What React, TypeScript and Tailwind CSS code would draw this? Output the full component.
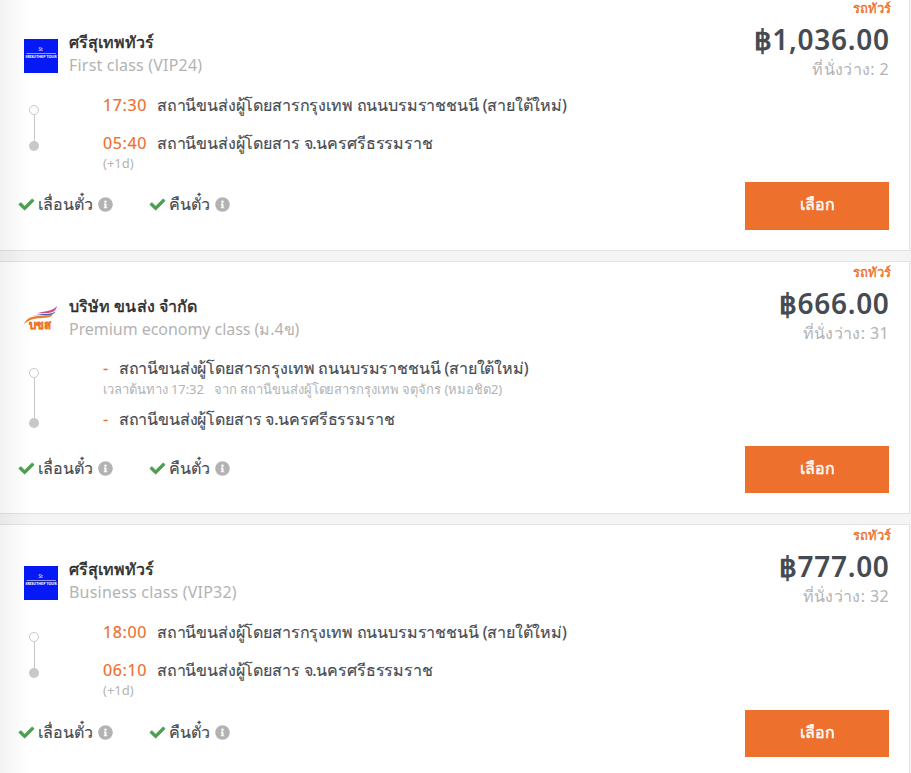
import { FaCheck, FaInfoCircle } from "react-icons/fa";

interface Stop {
  time: string;
  station: string;
  note?: string;
}

interface Trip {
  id: number;
  operator: string;
  logo: "srisuthep" | "transport";
  seatClass: string;
  price: string;
  seats: number;
  stops: Stop[];
}

const trips: Trip[] = [
  {
    id: 1,
    operator: "ศรีสุเทพทัวร์",
    logo: "srisuthep",
    seatClass: "First class (VIP24)",
    price: "฿1,036.00",
    seats: 2,
    stops: [
      { time: "17:30", station: "สถานีขนส่งผู้โดยสารกรุงเทพ ถนนบรมราชชนนี (สายใต้ใหม่)" },
      { time: "05:40", station: "สถานีขนส่งผู้โดยสาร จ.นครศรีธรรมราช", note: "(+1d)" },
    ],
  },
  {
    id: 2,
    operator: "บริษัท ขนส่ง จำกัด",
    logo: "transport",
    seatClass: "Premium economy class (ม.4ข)",
    price: "฿666.00",
    seats: 31,
    stops: [
      {
        time: "-",
        station: "สถานีขนส่งผู้โดยสารกรุงเทพ ถนนบรมราชชนนี (สายใต้ใหม่)",
        note: "เวลาต้นทาง 17:32 \u00a0 จาก สถานีขนส่งผู้โดยสารกรุงเทพ จตุจักร (หมอชิต2)",
      },
      { time: "-", station: "สถานีขนส่งผู้โดยสาร จ.นครศรีธรรมราช" },
    ],
  },
  {
    id: 3,
    operator: "ศรีสุเทพทัวร์",
    logo: "srisuthep",
    seatClass: "Business class (VIP32)",
    price: "฿777.00",
    seats: 32,
    stops: [
      { time: "18:00", station: "สถานีขนส่งผู้โดยสารกรุงเทพ ถนนบรมราชชนนี (สายใต้ใหม่)" },
      { time: "06:10", station: "สถานีขนส่งผู้โดยสาร จ.นครศรีธรรมราช", note: "(+1d)" },
    ],
  },
];

function Logo({ name }: { name: Trip["logo"] }) {
  if (name === "srisuthep") {
    return (
      <svg viewBox="0 0 34 34" className="h-[34px] w-[34px]">
        <rect width="34" height="34" fill="#0519f5" />
        <text x="16.5" y="12.3" fontSize="4.5" textAnchor="middle" fill="#fff">
          St
        </text>
        <path d="M2.5 14.5H32" stroke="#8f9aff" strokeWidth="1" />
        <text
          x="17"
          y="19.3"
          fontSize="3.7"
          fontWeight="700"
          textAnchor="middle"
          fill="#fff"
        >
          SRISUTHEP TOUR
        </text>
      </svg>
    );
  }
  return (
    <svg viewBox="0 0 34 34" className="h-[34px] w-[34px]">
      <path d="M12 10.5C20 8 28 9 33 3C31.5 12 22 9.5 12 10.5Z" fill="#d44a8c" />
      <path d="M9 13C18 9.5 25 12.5 31.5 8.5C28 15 18 11 9 13Z" fill="#3c69a8" />
      <path d="M0 21C5 10 17 14.5 29 11.5C24 18 10 11.5 0 21Z" fill="#ef7b2f" />
      <text
        x="4.5"
        y="26"
        fontSize="12.5"
        fontWeight="700"
        textLength="23"
        lengthAdjust="spacingAndGlyphs"
        fill="#ee7427"
        stroke="#ee7427"
        strokeWidth="0.4"
      >
        บขส
      </text>
    </svg>
  );
}

function Perk({ label, className }: { label: string; className: string }) {
  return (
    <div className={`flex items-center ${className}`}>
      <FaCheck className="h-[15px] w-[15px] overflow-visible stroke-[20] text-[#4ba04f]" />
      <span className="ml-1 whitespace-nowrap">{label}</span>
      <FaInfoCircle className="mt-px ml-auto h-[15px] w-[15px] text-[#b3b3b3]" />
    </div>
  );
}

function TripCard({ trip, first }: { trip: Trip; first: boolean }) {
  const long = trip.logo === "transport";
  return (
    <article
      className={`flex w-[910px] shrink-0 justify-between border border-l-0 border-[#e2e2e4] bg-white pr-5 ${
        long ? "h-[253px]" : "h-[254px]"
      }`}
    >
      <div className="flex w-[600px] flex-col pl-6">
        <header className="flex h-[90px] pt-[31px]">
          <div className="mt-[10px]">
            <Logo name={trip.logo} />
          </div>
          <div className="ml-[11px] whitespace-nowrap">
            <h2 className="h-[24px] text-[16px] leading-[26px] font-normal tracking-[0.05px] text-[#2a2a2a] [-webkit-text-stroke:0.45px_#2a2a2a]">
              {trip.operator}
            </h2>
            <p
              className={`text-[16px] leading-[24px] text-[#b3b3b3] ${
                long ? "tracking-[-0.05px]" : "tracking-[0.2px]"
              }`}
            >
              {trip.seatClass}
            </p>
          </div>
        </header>

        <div className={`flex ${long || first ? "h-[104px]" : "h-[105px]"}`}>
          <div className={`ml-[5px] flex w-[10px] flex-col items-center ${long ? "pt-[16px]" : "pt-[17px]"}`}>
            <span className="h-[10px] w-[10px] rounded-full border border-[#c8c8c8] bg-white" />
            <span className={`w-px bg-[#c8c8c8] ${long ? "h-[40px]" : "h-[26px]"}`} />
            <span className="h-[10px] w-[10px] rounded-full bg-[#c8c8c8]" />
          </div>
          <div className="ml-[64px] whitespace-nowrap">
            {trip.stops.map((stop, i) => (
              <div key={i} className={long ? "h-[51px] pt-[4px]" : "h-[38px] pt-[5px]"}>
                <div className="flex h-[24px] items-center gap-[10px] text-[16px] leading-6 text-[#464b52]">
                  <span className="tracking-[0.6px] text-[#ed702d] [-webkit-text-stroke:0.2px_#ed702d]">
                    {stop.time}
                  </span>
                  <span className="tracking-[-0.16px] [-webkit-text-stroke:0.15px_#464b52]">
                    {stop.station}
                  </span>
                </div>
                {stop.note && (
                  <p
                    className={`text-[13px] leading-[18px] text-[#b3b3b3] ${
                      long ? "tracking-[-0.05px]" : "-mt-px"
                    }`}
                  >
                    {stop.note}
                  </p>
                )}
              </div>
            ))}
          </div>
        </div>

        <div className="-ml-[5px] flex h-6 items-center text-[16px] text-[#464b52] [-webkit-text-stroke:0.15px_#464b52]">
          <Perk label="เลื่อนตั๋ว" className="w-[94px]" />
          <Perk label="คืนตั๋ว" className="ml-[37px] w-[80px]" />
        </div>
      </div>

      <div className="flex w-[144px] flex-col items-end whitespace-nowrap">
        <span className="-mr-[2px] h-[24px] text-[13px] leading-[20px] tracking-[-0.1px] text-[#ed702d] [-webkit-text-stroke:0.35px_#ed702d]">
          รถทัวร์
        </span>
        <strong className="-mr-[0.6px] h-[35px] text-[28px] leading-[35px] font-semibold tracking-[0.7px] text-[#464b52]">
          {trip.price}
        </strong>
        <span className="text-[16px] leading-6 tracking-[0.35px] text-[#b3b3b3]">
          ที่นั่งว่าง: {trip.seats}
        </span>
        <button
          className={`mt-auto mb-[20px] w-[144px] bg-[#ed702d] pb-[4px] text-[16px] text-white [-webkit-text-stroke:0.4px_#fff] ${
            first ? "h-[48px]" : "h-[47px]"
          }`}
        >
          เลือก
        </button>
      </div>
    </article>
  );
}

export default function App() {
  return (
    <main className="relative h-[773px] w-[911px] overflow-hidden bg-[#f4f4f4] font-['Noto_Sans',sans-serif]">
      <div className="-mt-[3px] flex flex-col gap-[10px]">
        {trips.map((trip, i) => (
          <TripCard key={trip.id} trip={trip} first={i === 0} />
        ))}
      </div>
      {/* soft shadow cast by the filter sidebar */}
      <div className="pointer-events-none absolute inset-y-0 left-0 w-[30px] bg-gradient-to-r from-black/5 to-transparent" />
    </main>
  );
}
